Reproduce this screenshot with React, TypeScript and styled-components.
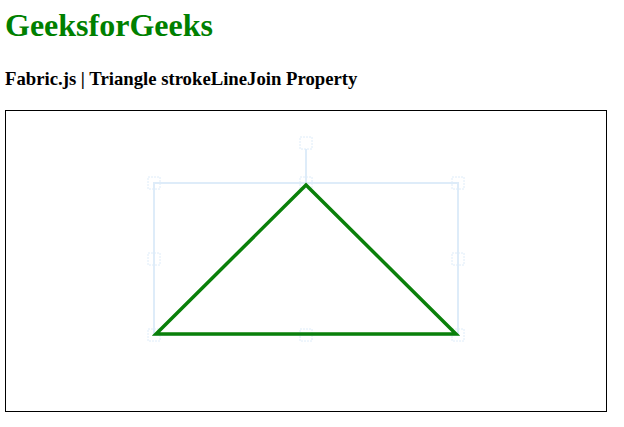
import React from "react";
import styled, { createGlobalStyle } from "styled-components";

const GlobalStyle = createGlobalStyle`
  body {
    margin: 0;
    padding: 7px 5px 0;
    font-family: "Liberation Serif", "Times New Roman", serif;
    background: #fff;
  }
`;

const Title = styled.h1`
  margin: 0;
  font-size: 32px;
  font-weight: bold;
  color: green;
`;

const Subtitle = styled.h3`
  margin: 24px 0 20px;
  font-size: 18.72px;
  font-weight: bold;
  color: #000;
`;

const CanvasFrame = styled.div`
  width: 600px;
  height: 300px;
  border: 1px solid #000;
`;

const BORDER = "#deecf9";

// selection box around the triangle, like fabric's active object controls
const box = { left: 148, top: 72, right: 452, bottom: 224 };
const midX = (box.left + box.right) / 2;
const midY = (box.top + box.bottom) / 2;

const corners = [
  [box.left, box.top],
  [midX, box.top],
  [box.right, box.top],
  [box.left, midY],
  [box.right, midY],
  [box.left, box.bottom],
  [midX, box.bottom],
  [box.right, box.bottom],
  [midX, 32],
];

const TriangleScene = () => (
  <svg width="600" height="300" style={{ display: "block" }}>
    <g stroke={BORDER} strokeWidth={2} fill="none">
      <rect
        x={box.left}
        y={box.top}
        width={box.right - box.left}
        height={box.bottom - box.top}
      />
      <line x1={midX} y1={38} x2={midX} y2={box.top} />
    </g>
    <g stroke={BORDER} strokeWidth={1} fill="none" strokeDasharray="2 1">
      {corners.map(([cx, cy], i) => (
        <rect key={i} x={cx - 6} y={cy - 6} width={12} height={12} />
      ))}
    </g>
    <polygon
      points="300,74 150,223 450,223"
      fill="none"
      stroke="#0a800a"
      strokeWidth={3.5}
      strokeLinejoin="miter"
    />
  </svg>
);

export default function App() {
  return (
    <>
      <GlobalStyle />
      <Title>GeeksforGeeks</Title>
      <Subtitle>Fabric.js | Triangle strokeLineJoin Property</Subtitle>
      <CanvasFrame>
        <TriangleScene />
      </CanvasFrame>
    </>
  );
}
